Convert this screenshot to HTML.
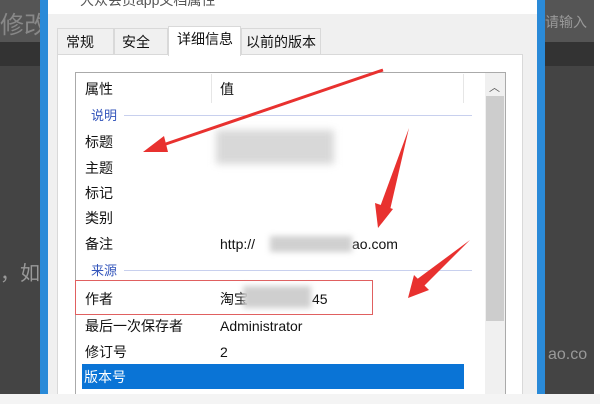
<!DOCTYPE html>
<html><head><meta charset="utf-8"><style>
*{margin:0;padding:0;box-sizing:border-box}
body{width:600px;height:404px;overflow:hidden;background:#fff;font-family:"Liberation Sans","Noto Sans CJK SC",sans-serif;position:relative}
.abs{position:absolute}
.t{position:absolute;font-size:14px;color:#111;line-height:16px;white-space:nowrap}
</style></head><body>
<div class="abs" style="left:0;top:0;width:594px;height:396px;background:#444"></div>
<div class="abs" style="left:0;top:0;width:594px;height:42px;background:#555"></div>
<div class="abs" style="left:0;top:42px;width:594px;height:24px;background:#333"></div>
<div class="t" style="left:0;top:12px;font-size:24px;color:#888;line-height:28px">修改</div>
<div class="t" style="left:545px;top:14px;font-size:14px;color:#999">请输入</div>
<div class="t" style="left:0;top:262px;font-size:20px;color:#999;line-height:24px">，如</div>
<div class="t" style="left:548px;top:347px;font-size:16px;color:#999">ao.co</div>
<!-- dialog -->
<div class="abs" style="left:40px;top:0;width:505px;height:394px;background:#2a8ad8"></div>
<div class="abs" style="left:48px;top:0;width:489px;height:394px;background:#f0f0f0"></div>
<div class="abs" style="left:48px;top:0;width:489px;height:14px;background:#fff"></div>
<div class="t" style="left:80px;top:-8px;color:#555">大众会员app文档属性</div>
<!-- tabs -->
<div class="abs" style="left:57px;top:28px;width:57px;height:27px;border:1px solid #d9d9d9;background:#f0f0f0"></div>
<div class="t" style="left:66px;top:34px">常规</div>
<div class="abs" style="left:114px;top:28px;width:54px;height:27px;border:1px solid #d9d9d9;background:#f0f0f0"></div>
<div class="t" style="left:122px;top:34px">安全</div>
<div class="abs" style="left:241px;top:28px;width:80px;height:27px;border:1px solid #d9d9d9;background:#f0f0f0"></div>
<div class="t" style="left:246px;top:34px">以前的版本</div>
<div class="abs" style="left:57px;top:54px;width:466px;height:345px;background:#fff;border:1px solid #d9d9d9"></div>
<div class="abs" style="left:168px;top:26px;width:73px;height:30px;background:#fff;border:1px solid #d9d9d9;border-bottom:none"></div>
<div class="t" style="left:177px;top:31px">详细信息</div>
<!-- listbox -->
<div class="abs" style="left:75px;top:72px;width:431px;height:330px;border:1px solid #aaa;background:#fff"></div>
<div class="abs" style="left:211px;top:74px;width:1px;height:29px;background:#e6e6e6"></div>
<div class="abs" style="left:463px;top:74px;width:1px;height:29px;background:#e6e6e6"></div>
<div class="abs" style="left:485px;top:73px;width:20px;height:328px;background:#f0f0f0"></div>
<div class="abs" style="left:486px;top:96px;width:18px;height:225px;background:#cdcdcd"></div>
<div class="t" style="left:489px;top:80px;font-size:11px;color:#555">︿</div>
<div class="t" style="left:85px;top:81px">属性</div>
<div class="t" style="left:220px;top:81px">值</div>
<div class="t" style="left:91px;top:108px;color:#3355bb;font-size:13px">说明</div>
<div class="abs" style="left:124px;top:115px;width:348px;height:1px;background:#c8d0ee"></div>
<div class="t" style="left:85px;top:134px">标题</div>
<div class="t" style="left:85px;top:160px">主题</div>
<div class="t" style="left:85px;top:185px">标记</div>
<div class="t" style="left:85px;top:210px">类别</div>
<div class="t" style="left:85px;top:236px">备注</div>
<div class="t" style="left:220px;top:236px">http://</div>
<div class="t" style="left:352px;top:236px">ao.com</div>
<div class="abs" style="left:216px;top:130px;width:118px;height:34px;background:#d8d8d8;filter:blur(4px)"></div>
<div class="abs" style="left:270px;top:236px;width:82px;height:16px;background:#d0d0d0;filter:blur(3px)"></div>
<div class="t" style="left:91px;top:263px;color:#3355bb;font-size:13px">来源</div>
<div class="abs" style="left:124px;top:270px;width:348px;height:1px;background:#c8d0ee"></div>
<div class="abs" style="left:75px;top:280px;width:298px;height:35px;border:1px solid #e06060"></div>
<div class="t" style="left:85px;top:291px">作者</div>
<div class="t" style="left:220px;top:291px">淘宝</div>
<div class="t" style="left:312px;top:291px">45</div>
<div class="abs" style="left:243px;top:286px;width:68px;height:22px;background:#cfcfcf;filter:blur(3px)"></div>
<div class="t" style="left:85px;top:318px">最后一次保存者</div>
<div class="t" style="left:220px;top:318px">Administrator</div>
<div class="t" style="left:85px;top:344px">修订号</div>
<div class="t" style="left:220px;top:344px">2</div>
<div class="abs" style="left:82px;top:364px;width:382px;height:25px;background:#0a74d6"></div>
<div class="t" style="left:84px;top:369px;color:#fff">版本号</div>
<div class="abs" style="left:0;top:394px;width:600px;height:10px;background:#f4f4f4"></div>
<!-- arrows -->
<svg class="abs" style="left:0;top:0" width="600" height="404">
<g fill="#e8312f" stroke="#e8312f">
<line x1="383" y1="70" x2="160" y2="146" stroke-width="3"/>
<polygon points="143,152 164,136 168,152" stroke="none"/>
<polygon points="409,128 390,210 380,207" stroke="none"/>
<polygon points="378,228 375,203 393,209" stroke="none"/>
<polygon points="470,240 423,287 416,280" stroke="none"/>
<polygon points="408,298 414,275 429,290" stroke="none"/>
</g></svg>
</body></html>
